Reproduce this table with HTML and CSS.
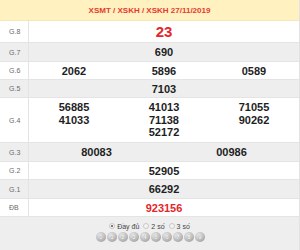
FILE: index.html
```html
<!DOCTYPE html>
<html>
<head>
<meta charset="utf-8">
<link rel="stylesheet" href="styles.css">
</head>
<body>
<div class="board">
  <div class="head">XSMT / XSKH / XSKH 27/11/2019</div>
  <div class="row white h22"><div class="lbl">G.8</div><div class="vals one"><span class="big red">23</span></div></div>
  <div class="row gray h19"><div class="lbl">G.7</div><div class="vals one"><span>690</span></div></div>
  <div class="row white h18"><div class="lbl">G.6</div><div class="vals three"><span>2062</span><span>5896</span><span>0589</span></div></div>
  <div class="row gray h18"><div class="lbl">G.5</div><div class="vals one"><span>7103</span></div></div>
  <div class="row white h45"><div class="lbl">G.4</div><div class="vals three g4"><span>56885</span><span>41013</span><span>71055</span><span>41033</span><span>71138</span><span>90262</span><span></span><span>52172</span><span></span></div></div>
  <div class="row gray h19"><div class="lbl">G.3</div><div class="vals two"><span>80083</span><span>00986</span></div></div>
  <div class="row white h18"><div class="lbl">G.2</div><div class="vals one"><span>52905</span></div></div>
  <div class="row gray h19"><div class="lbl">G.1</div><div class="vals one"><span>66292</span></div></div>
  <div class="row white h18"><div class="lbl">ĐB</div><div class="vals one"><span class="red">923156</span></div></div>
  <div class="foot">
    <div class="radios">
      <label class="opt"><span class="radio on"></span>Đầy đủ</label>
      <label class="opt"><span class="radio"></span>2 số</label>
      <label class="opt"><span class="radio"></span>3 số</label>
    </div>
    <div class="balls">
      <span class="ball">0</span><span class="ball">1</span><span class="ball">2</span><span class="ball">3</span><span class="ball">4</span><span class="ball">5</span><span class="ball">6</span><span class="ball">7</span><span class="ball">8</span><span class="ball">9</span>
    </div>
  </div>
</div>
</body>
</html>
```
FILE: styles.css
```css
* { box-sizing: border-box; }
html, body { margin: 0; padding: 0; background: #fff; }
body { font-family: "Liberation Sans", Arial, sans-serif; }
.board { width: 300px; height: 250px; border-right: 1px solid #e2e2e2; }
.head {
  height: 21px;
  background: #fff1c0;
  color: #e53a2f;
  font-weight: bold;
  font-size: 8px;
  display: flex;
  align-items: center;
  justify-content: center;
  border-bottom: 1px solid #f3e6b8;
}
.row { display: flex; border-bottom: 1px solid #e4e4e4; }
.white { background: #fff; }
.gray { background: #eeeeee; }
.h22 { height: 22px; }
.h19 { height: 19px; }
.h18 { height: 18px; }
.h45 { height: 45px; }
.lbl {
  width: 29px;
  flex: none;
  border-right: 1px solid #e4e4e4;
  font-size: 7px;
  color: #6a6a6a;
  display: flex;
  align-items: center;
  padding-left: 9px;
}
.vals {
  flex: 1;
  display: grid;
  align-items: center;
  align-content: center;
  justify-items: center;
  font-weight: bold;
  font-size: 11px;
  color: #1e1e1e;
}
.one { grid-template-columns: 1fr; }
.two { grid-template-columns: 1fr 1fr; }
.three { grid-template-columns: 1fr 1fr 1fr; }
.g4 { row-gap: 0; line-height: 12.5px; }
.big { font-size: 15px; }
.red { color: #e3262b; }
.foot {
  height: 33px;
  background: #eeeeee;
  display: flex;
  flex-direction: column;
  align-items: center;
  padding-top: 5px;
  gap: 2px;
}
.radios { display: flex; gap: 4px; font-size: 7px; color: #444; align-items: center; height: 8px; }
.opt { display: flex; align-items: center; gap: 2px; }
.radio {
  width: 6px; height: 6px; border-radius: 50%;
  border: 1px solid #c8c8c8;
  background: #f4f4f4;
  display: inline-block;
  position: relative;
}
.radio.on::after {
  content: ""; position: absolute; left: 1px; top: 1px;
  width: 2px; height: 2px; border-radius: 50%; background: #555;
}
.balls { display: flex; gap: 1px; margin-left: 2px; }
.ball {
  width: 10px; height: 10px; border-radius: 50%;
  background: radial-gradient(circle at 40% 35%, #f2f2f2 0%, #c4c4c4 45%, #8a8a8a 100%);
  color: #fff;
  font-size: 6px;
  font-weight: bold;
  display: flex; align-items: center; justify-content: center;
  text-shadow: 0 0 1px #555;
}
```
